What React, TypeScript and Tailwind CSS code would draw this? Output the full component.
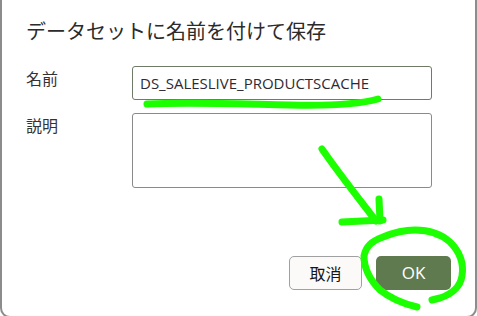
import React from "react";

export default function App() {
  return (
    <div className="relative h-[316px] w-[477px] overflow-hidden bg-white">
      <div className="flex h-[318px] w-[477px] flex-col rounded-b-[10px] border-x-2 border-b-2 border-[#8c8c8c] bg-white font-['Noto_Sans_CJK_JP','Noto_Sans',sans-serif] text-[#333]">
        <div className="px-[24px] pt-[16px] text-[20px] leading-[30px] text-[#2b2b2b]">
          データセットに名前を付けて保存
        </div>
        <div className="mt-[20px] grid grid-cols-[106px_300px] gap-y-[13px] px-[24px]">
          <div className="text-[16px] leading-[24px] text-[#333]">名前</div>
          <div className="flex h-[34px] items-center rounded-[3px] border border-[#6f7a68] bg-white px-[7px] font-['Open_Sans',sans-serif] text-[15px] text-[#2e2a35]">
            DS_SALESLIVE_PRODUCTSCACHE
          </div>
          <div className="text-[16px] leading-[24px] text-[#333]">説明</div>
          <div className="h-[75px] rounded-[3px] border border-[#8a8a8a] bg-white" />
        </div>
        <div className="mt-auto mb-[26px] flex justify-end gap-[14px] px-[24px]">
          <button className="h-[34px] w-[73px] rounded-[5px] border border-[#a0a0a0] bg-[#fbfaf8] text-[16px] text-[#161513]">
            取消
          </button>
          <button className="h-[34px] w-[75px] rounded-[5px] bg-[#5f7a4f] font-['Open_Sans',sans-serif] text-[17px] text-white">
            OK
          </button>
        </div>
      </div>
      <svg
        className="pointer-events-none absolute inset-0"
        width="477"
        height="316"
        viewBox="0 0 477 316"
        fill="none"
        stroke="#1cff00"
        strokeWidth="7"
        strokeLinecap="round"
        strokeLinejoin="round"
      >
        <path d="M147 104 C 190 102, 240 104, 290 105 C 330 106, 360 104, 378 99" />
        <path d="M322 149 C 340 175, 360 200, 376 221" />
        <path d="M379 199 L 380 221" />
        <path d="M342 222 L 383 220" />
        <path d="M417 307 C 400 303, 390 298, 380 290 C 370 280, 364 268, 364 256 C 366 246, 372 241, 383 237 C 395 232, 405 230, 415 230 C 428 230, 440 233, 450 242 C 460 252, 464 264, 462 276 C 460 288, 452 294, 440 298 L 432 300" />
      </svg>
    </div>
  );
}
